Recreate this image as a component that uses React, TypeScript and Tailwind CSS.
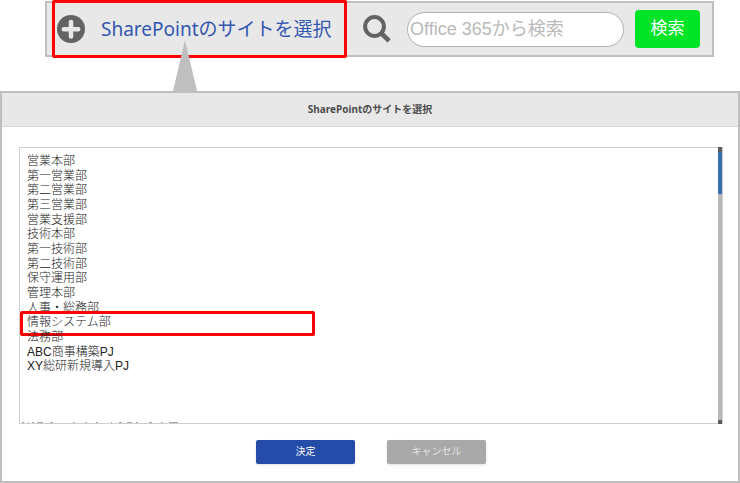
import React, { useState } from 'react';

const sites = [
  '営業本部',
  '第一営業部',
  '第二営業部',
  '第三営業部',
  '営業支援部',
  '技術本部',
  '第一技術部',
  '第二技術部',
  '保守運用部',
  '管理本部',
  '人事・総務部',
  '情報システム部',
  '法務部',
  'ABC商事構築PJ',
  'XY総研新規導入PJ',
];

function PlusIcon() {
  return (
    <svg viewBox="0 0 28 28" className="size-7 shrink-0" aria-hidden="true">
      <circle cx="14" cy="14" r="14" fill="#636363" />
      <path d="M14 7v14.4M6.8 14.2h14.4" stroke="#e8e8e8" strokeWidth="4.6" strokeLinecap="round" />
    </svg>
  );
}

function SearchIcon() {
  return (
    <svg viewBox="0 0 28 28" className="size-7 shrink-0" fill="none" stroke="#636363" aria-hidden="true">
      <circle cx="11.5" cy="11.5" r="9.4" strokeWidth="4" />
      <path d="M18.5 18.5l7.6 7.4" strokeWidth="4.6" />
    </svg>
  );
}

function Toolbar() {
  return (
    <div className="ml-[45px] mr-[26px] mt-px flex h-14 items-center border-2 border-[#bfbfbf] bg-[#e8e8e8] pl-[10px] pr-3">
      <div className="relative flex items-center">
        <button type="button" className="flex items-center gap-4 whitespace-nowrap text-[19px] leading-7 text-[#3457b1]">
          <PlusIcon />
          SharePointのサイトを選択
        </button>
        <div className="pointer-events-none absolute -inset-y-[15px] -left-[5px] -right-[15px] rounded-xs border-3 border-[#ff0000]" />
        {/* Pointer down to the dialog */}
        <svg viewBox="0 0 24 51" className="absolute left-[116px] top-[25px] h-[51px] w-6" aria-hidden="true">
          <path d="M12 0L24 51H0z" fill="#bfbfbf" />
        </svg>
      </div>
      <form className="ml-auto flex items-center" onSubmit={(e) => e.preventDefault()}>
        <SearchIcon />
        <input
          type="text"
          aria-label="Office 365から検索"
          placeholder="Office 365から検索"
          className="ml-4 h-[35px] w-[217px] rounded-full border border-[#b0b0b0] bg-white px-0.5 font-['Liberation_Sans','Noto_Sans_CJK_JP',sans-serif] text-lg placeholder:text-[#b9b9b9]"
        />
        <button type="submit" className="ml-[11px] h-[38px] w-[65px] rounded-sm bg-[#00e427] pb-0.5 text-[17px] leading-6 text-white">
          検索
        </button>
      </form>
    </div>
  );
}

function SiteList() {
  const [selected, setSelected] = useState('情報システム部');

  return (
    <div className="ml-[17px] mr-[15px] mt-5 flex h-[277px] border border-r-0 border-[#cfcfcf]">
      <div className="relative flex-1 overflow-hidden">
        <div
          role="radiogroup"
          aria-label="サイト"
          className="mt-1.5 grid h-[220px] auto-rows-fr px-[7px] font-['Liberation_Sans','Noto_Sans_CJK_JP',sans-serif] text-xs font-light leading-[14px] text-[#222222]"
        >
          {sites.map((site) => (
            <label key={site} className="relative min-h-0">
              <input
                type="radio"
                name="site"
                className="absolute size-0 appearance-none"
                checked={selected === site}
                onChange={() => setSelected(site)}
              />
              {site}
              {selected === site && (
                <span className="absolute -left-[7px] -top-1 h-[25px] w-[295px] rounded-xs border-3 border-[#ff0000]" />
              )}
            </label>
          ))}
        </div>
        {/* Tops of the next row, cut off by the frame */}
        <svg viewBox="0 0 160 2" className="absolute bottom-0 left-px h-0.5 w-40" aria-hidden="true">
          <path
            d="M1 1.5h2M7 1.5h1M11 1.5h2M16 1.5h6M29 1.5h3M52 1.5h2M64 1.5h2M75 1.5h2M90 1.5h1M98 1.5h3M106 1.5h5M115 1.5h2M128 1.5h3M140 1.5h2M148 1.5h9"
            stroke="#a5a5a5"
            strokeWidth="1"
          />
        </svg>
      </div>
      <div className="-my-px flex w-[5px] flex-col border-r border-[#cfcfcf] bg-[#b8b8b8]">
        <div className="h-[5px] bg-[#5c5c5c]" />
        <div className="h-[42px] bg-[#3a6eae]" />
        <div className="mt-auto h-1 bg-[#5c5c5c]" />
      </div>
    </div>
  );
}

export default function App() {
  return (
    <div className="flow-root min-h-screen bg-white font-['Noto_Sans','Noto_Sans_CJK_JP',sans-serif]">
      <Toolbar />
      <section className="mt-[34px] border-2 border-[#bfbfbf] bg-white">
        <h1 className="border-b border-[#d9d9d9] bg-[#e8e8e8] pb-[9px] pt-2 text-center text-[10px] font-bold leading-4 text-[#4d4d4d]">
          SharePointのサイトを選択
        </h1>
        <SiteList />
        <div className="flex justify-center gap-8 pb-[17px] pl-0.5 pt-4 text-[10px] leading-4 text-white">
          <button type="button" className="h-6 w-[99px] rounded-xs bg-[#244ca8] pb-0.5 shadow-sm">
            決定
          </button>
          <button type="button" className="h-6 w-[99px] rounded-xs bg-[#a9a9a9] pb-0.5 text-[#e4e4e4] shadow-sm">
            キャンセル
          </button>
        </div>
      </section>
    </div>
  );
}
